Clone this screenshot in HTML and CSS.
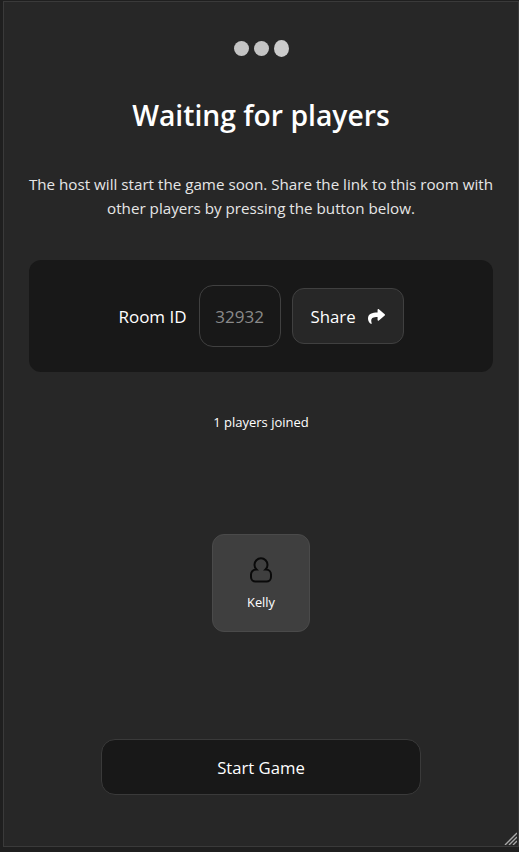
FILE: index.html
```html
<!DOCTYPE html>
<html lang="en">
<head>
  <meta charset="UTF-8" />
  <meta name="viewport" content="width=device-width, initial-scale=1.0" />
  <title>Waiting for players</title>
  <link rel="stylesheet" href="styles.css">
</head>
<body>

  <div class="lobby">
    <div class="dots">
      <span class="dot"></span>
      <span class="dot"></span>
      <span class="dot dot-big"></span>
    </div>

    <h1>Waiting for players</h1>

    <p class="intro">The host will start the game soon. Share the link to this room with other players by pressing the button below.</p>

    <div class="room-box">
      <label for="room-id">Room ID</label>
      <input type="text" id="room-id" value="32932" readonly />
      <button type="button" class="share-btn">
        Share
        <svg class="share-icon" viewBox="0 0 512 512" width="17" height="17" aria-hidden="true">
          <path fill="currentColor" d="M503.7 189.8 327.7 37.9C312.3 24.6 288 35.4 288 56v80.1C127.400 137.900 0 170.100 0 322.300c0 61.400 39.600 122.300 83.300 154.100 13.700 9.900 33.100-2.500 28.100-18.600C66 312.800 132.900 274.300 288 272.100V360c0 20.700 24.300 31.400 39.700 18.200l176-152c11.100-9.600 11.100-26.800 0-36.400z"/>
        </svg>
      </button>
    </div>

    <p class="count">1 players joined</p>

    <div class="players">
      <div class="player-card">
        <svg class="player-icon" viewBox="0 0 24 26" width="24" height="26" fill="none" stroke="currentColor" stroke-width="2" aria-hidden="true">
          <path d="M7.500 12.500A6.500 6.500 0 1 1 16.500 12.500H17A5 5 0 0 1 22 17.500V20A4.500 4.500 0 0 1 17.500 24.500H6.500A4.500 4.500 0 0 1 2 20V17.500A5 5 0 0 1 7 12.500Z" />
        </svg>
        <span class="player-name">Kelly</span>
      </div>
    </div>

    <button type="button" class="start-btn">Start Game</button>

    <svg class="grip" viewBox="0 0 13 13" width="13" height="13" aria-hidden="true">
      <path d="M13 1 1 13M13 5 5 13M13 9 9 13" stroke="#a8a8a8" stroke-width="1.400" />
    </svg>
  </div>

</body>
</html>
```

FILE: styles.css
```css
* {
  box-sizing: border-box;
}

html,
body {
  height: 100%;
}

body {
  margin: 0;
  padding: 1px 0 0 3px;
  background: #1f1f1f;
  font-family: 'Open Sans', 'Noto Sans', sans-serif;
  color: #fff;
}

.lobby {
  position: relative;
  display: flex;
  flex-direction: column;
  align-items: center;
  width: 516px;
  height: 846px;
  padding: 37px 20px 0;
  background: #272727;
  border: 1px solid #3a3a3a;
}

.dots {
  display: flex;
  align-items: center;
  gap: 5px;
  height: 18px;
}

.dot {
  width: 15px;
  height: 15px;
  border-radius: 50%;
  background: #c4c4c4;
}

.dot-big {
  height: 17px;
  background: #cccccc;
}

h1 {
  margin: 38px 0 0;
  font-size: 28.300px;
  font-weight: 600;
  line-height: 40px;
}

.intro {
  width: 472px;
  margin: 37px 0 0;
  font-size: 15.200px;
  line-height: 24px;
  text-align: center;
  color: #e6e6e6;
}

.room-box {
  display: flex;
  align-items: center;
  justify-content: center;
  width: 464px;
  height: 112px;
  margin-top: 40px;
  background: #181818;
  border-radius: 12px;
}

.room-box label {
  margin-right: 12px;
  font-size: 17px;
}

#room-id {
  width: 82px;
  height: 62px;
  padding: 0;
  background: transparent;
  border: 1px solid #404040;
  border-radius: 14px;
  font: inherit;
  font-size: 17px;
  text-align: center;
  color: #8a8a8a;
}

.share-btn {
  display: flex;
  align-items: center;
  justify-content: center;
  gap: 12px;
  width: 112px;
  height: 56px;
  margin-left: 11px;
  background: #272727;
  border: 1px solid #404040;
  border-radius: 12px;
  font: inherit;
  font-size: 16.800px;
  color: #fff;
}

.count {
  margin: 40px 0 0;
  font-size: 13px;
  line-height: 20px;
}

.players {
  display: flex;
  justify-content: center;
  margin-top: 102px;
}

.player-card {
  display: flex;
  flex-direction: column;
  align-items: center;
  width: 98px;
  height: 98px;
  padding-top: 22px;
  background: #3f3f3f;
  border: 1px solid #4a4a4a;
  border-radius: 12px;
}

.player-icon {
  color: #0a0a0a;
}

.player-name {
  margin-top: 10px;
  font-size: 12.800px;
  line-height: 18px;
}

.start-btn {
  width: 320px;
  height: 56px;
  margin-top: 107px;
  background: #181818;
  border: 1px solid #3a3a3a;
  border-radius: 14px;
  font: inherit;
  font-size: 16.700px;
  color: #fff;
}

/* window resize handle */
.grip {
  position: absolute;
  right: 1px;
  bottom: 1px;
}
```
